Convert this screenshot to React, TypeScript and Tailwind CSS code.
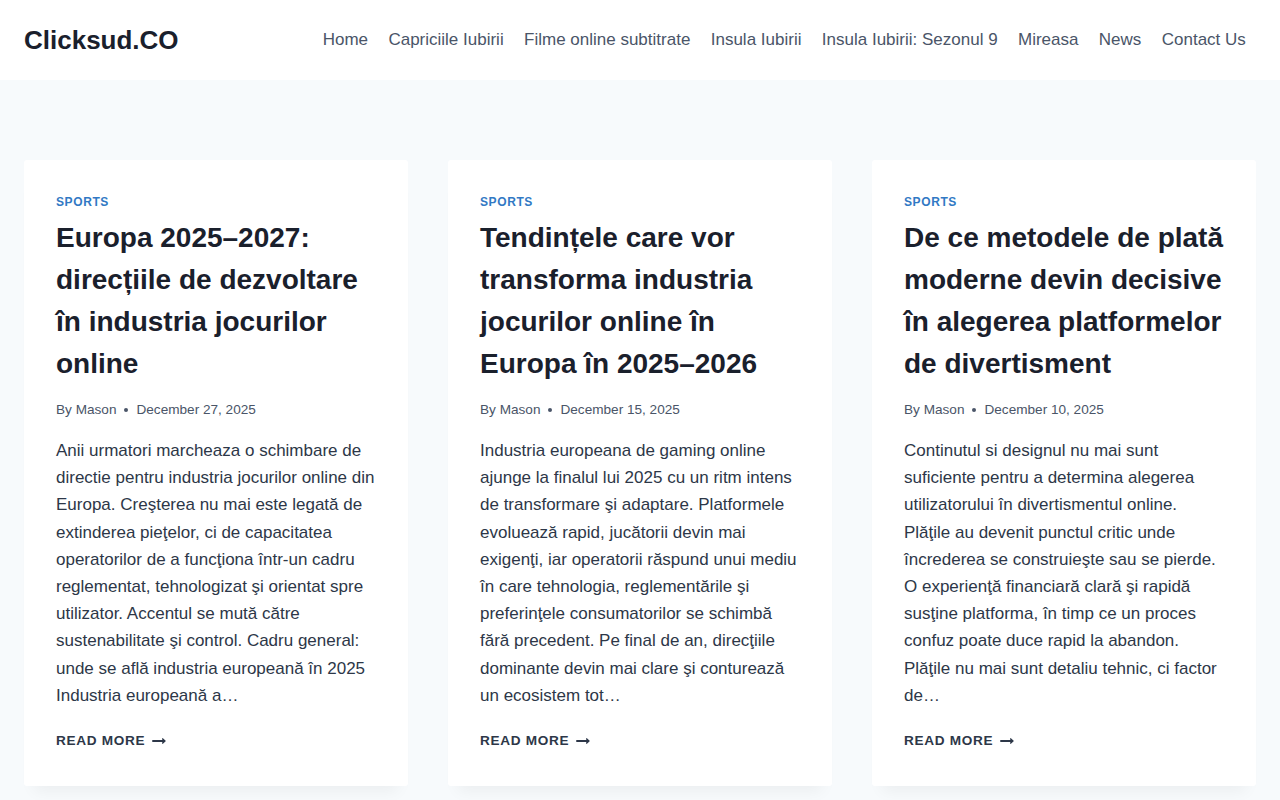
import React from 'react';

type Post = {
  category: string;
  title: string;
  author: string;
  date: string;
  excerpt: string;
};

const navLinks = [
  'Home',
  'Capriciile Iubirii',
  'Filme online subtitrate',
  'Insula Iubirii',
  'Insula Iubirii: Sezonul 9',
  'Mireasa',
  'News',
  'Contact Us',
];

const posts: Post[] = [
  {
    category: 'Sports',
    title: 'Europa 2025–2027: direcțiile de dezvoltare în industria jocurilor online',
    author: 'Mason',
    date: 'December 27, 2025',
    excerpt:
      'Anii urmatori marcheaza o schimbare de directie pentru industria jocurilor online din Europa. Creşterea nu mai este legată de extinderea pieţelor, ci de capacitatea operatorilor de a funcţiona într-un cadru reglementat, tehnologizat şi orientat spre utilizator. Accentul se mută către sustenabilitate şi control. Cadru general: unde se află industria europeană în 2025 Industria europeană a…',
  },
  {
    category: 'Sports',
    title: 'Tendințele care vor transforma industria jocurilor online în Europa în 2025–2026',
    author: 'Mason',
    date: 'December 15, 2025',
    excerpt:
      'Industria europeana de gaming online ajunge la finalul lui 2025 cu un ritm intens de transformare şi adaptare. Platformele evoluează rapid, jucătorii devin mai exigenţi, iar operatorii răspund unui mediu în care tehnologia, reglementările şi preferinţele consumatorilor se schimbă fără precedent. Pe final de an, direcţiile dominante devin mai clare şi conturează un ecosistem tot…',
  },
  {
    category: 'Sports',
    title: 'De ce metodele de plată moderne devin decisive în alegerea platformelor de divertisment',
    author: 'Mason',
    date: 'December 10, 2025',
    excerpt:
      'Continutul si designul nu mai sunt suficiente pentru a determina alegerea utilizatorului în divertismentul online. Plăţile au devenit punctul critic unde încrederea se construieşte sau se pierde. O experienţă financiară clară şi rapidă susţine platforma, în timp ce un proces confuz poate duce rapid la abandon. Plăţile nu mai sunt detaliu tehnic, ci factor de…',
  },
];

const ArrowRight: React.FC = () => (
  <svg viewBox="0 0 27 28" className="ml-[7px] h-[14px] w-[14px] fill-current" aria-hidden="true">
    <path d="M27 13.953c0 0.141-0.063 0.281-0.156 0.375l-6 5.531c-0.156 0.141-0.359 0.172-0.547 0.094-0.172-0.078-0.297-0.25-0.297-0.453v-3.5h-19.5c-0.281 0-0.5-0.219-0.5-0.5v-3c0-0.281 0.219-0.5 0.5-0.5h19.5v-3.5c0-0.203 0.109-0.375 0.297-0.453s0.391-0.047 0.547 0.078l6 5.469c0.094 0.094 0.156 0.219 0.156 0.359v0z" />
  </svg>
);

const PostCard: React.FC<{ post: Post }> = ({ post }) => (
  <article className="flex flex-col rounded-[3px] bg-white px-8 pt-[33px] pb-[34px] shadow-[0_15px_15px_-10px_rgba(0,0,0,0.05)]">
    <div className="text-[12px] font-bold uppercase leading-[18px] tracking-[0.05em] text-[#3179c4]">
      {post.category}
    </div>
    <h2 className="mt-[6px] text-[28px] font-bold leading-[42px] text-[#1a202c]">{post.title}</h2>
    <div className="mt-[15px] flex items-center text-[13.6px] leading-[20px] text-[#4a5568]">
      <span>
        By <span>{post.author}</span>
      </span>
      <span className="mx-2 h-1 w-1 rounded-full bg-current" />
      <span>{post.date}</span>
    </div>
    <p className="mt-[17px] text-[17px] leading-[27.2px] text-[#2d3748]">{post.excerpt}</p>
    <a
      href="#"
      className="mt-[21px] flex items-center text-[13.6px] font-bold uppercase leading-[22px] tracking-[0.05em] text-[#2d3748]"
    >
      Read More
      <ArrowRight />
    </a>
  </article>
);

export default function App() {
  return (
    <div className="min-h-screen bg-[#f7fafc] font-['Liberation_Sans',Arial,sans-serif]">
      {/* Site header */}
      <header className="flex h-20 items-center justify-between bg-white px-6">
        <a href="#" className="text-[26px] font-bold text-[#1a202c]">
          Clicksud.CO
        </a>
        <nav className="flex items-center">
          {navLinks.map((link) => (
            <a key={link} href="#" className="px-[10.2px] text-[17px] text-[#4a5568]">
              {link}
            </a>
          ))}
        </nav>
      </header>

      {/* Latest posts */}
      <main className="px-6 pt-20 pb-20">
        <div className="grid grid-cols-3 gap-10">
          {posts.map((post) => (
            <PostCard key={post.title} post={post} />
          ))}
        </div>
      </main>
    </div>
  );
}
